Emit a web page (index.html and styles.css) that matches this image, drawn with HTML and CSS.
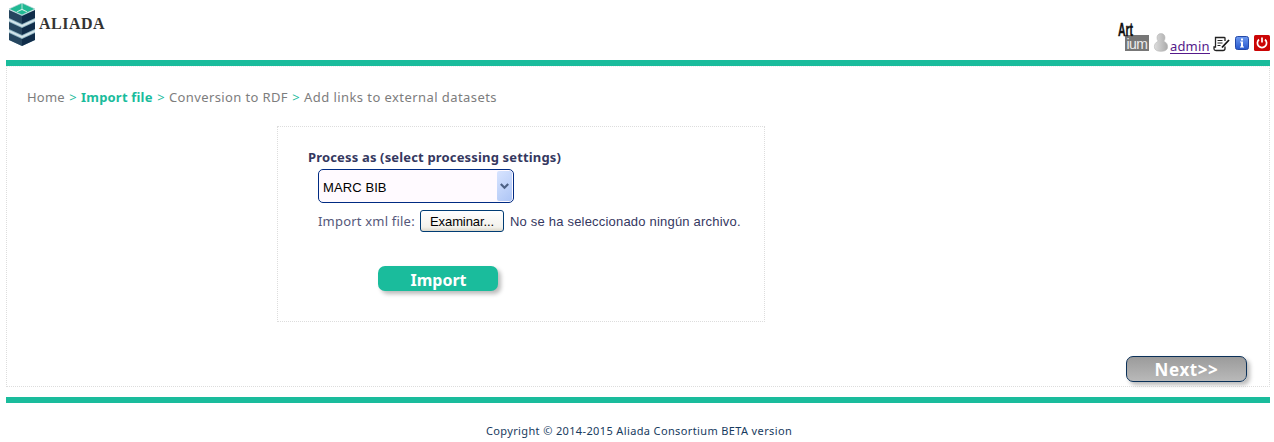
FILE: index.html
```html
<!DOCTYPE html>
<html lang="en">
<head>
<meta charset="utf-8">
<title>ALIADA</title>
<link rel="stylesheet" href="styles.css">
</head>
<body>
<header class="header">
  <a class="brand">
    <svg class="cube" width="28" height="44" viewBox="0 0 28 44">
      <path fill="#8fb5c2" d="M1 7 14 12 27 7V37L14 43 1 37z"/>
      <path fill="#26465f" d="M1 7 14 13V21L1 15zM1 19 14 25V32L1 26zM1 30 14 36V43L1 37z"/>
      <path fill="#102d4a" d="M27 7 14 13V21L27 15zM27 19 14 25V32L27 26zM27 30 14 36V43L27 37z"/>
      <path fill="#d5e5eb" d="M1 16 14 22 27 16V18L14 24 1 18zM1 27 14 33 27 27V29L14 35 1 29z"/>
      <path fill="#20b993" stroke="#b4d2d5" stroke-width=".7" d="M14 0 27 6 14 12 1 6z"/>
      <path fill="#d9f0e9" d="M13.600 0h.8v6l5 2.500-1 .5-4.400-2-4.500 2-1-.5 5.100-2.500z"/>
    </svg>
    <span class="brand-name">ALIADA</span>
  </a>
  <div class="tools">
    <span class="artium"><span class="art">Art</span><span class="ium">ium</span></span>
    <svg class="user" width="16" height="19" viewBox="0 0 16 19">
      <defs><linearGradient id="ug"><stop offset="0" stop-color="#ddd"/><stop offset="1" stop-color="#aaa"/></linearGradient></defs>
      <path fill="url(#ug)" stroke="#b5b5b5" stroke-width=".6" d="M8 .6c2.600 0 4 1.700 4 4.200 0 1.500-.5 2.600-1.300 3.400 2.600 1 3.900 3 3.900 5.500 0 3.400-2.800 4.600-6.600 4.600s-6.600-1.200-6.600-4.600c0-2.500 1.300-4.500 3.900-5.500C4.500 7.400 4 6.300 4 4.800 4 2.300 5.400.6 8 .6z"/>
    </svg>
    <a class="admin">admin</a>
    <svg class="edit" width="17" height="16" viewBox="0 0 17 16">
      <path fill="#fff" stroke="#222" stroke-width="1.300" d="M12 5V2Q12 1.500 11 1.500H2.500v9.500H1v2Q1 14.500 3 14.500h7q2 0 2-2v-2"/>
      <path stroke="#222" d="M4.500 4.500h5M4.500 7h5M4.500 9.500h3"/>
      <path stroke="#111" stroke-width="1.800" d="m9 11.500 7-7.500"/>
    </svg>
    <svg class="info" width="14" height="14" viewBox="0 0 14 14">
      <defs><linearGradient id="ig" x2="0" y2="1"><stop offset="0" stop-color="#6e9af0"/><stop offset="1" stop-color="#2456cc"/></linearGradient></defs>
      <rect x=".5" y=".5" width="13" height="13" rx="2" fill="url(#ig)" stroke="#2449a8"/>
      <path fill="#fff" d="M6 2.500h2v2H6zM5 5.500h3v5h1v1H5v-1h1v-4H5z"/>
    </svg>
    <svg class="power" width="16" height="16" viewBox="0 0 16 16">
      <rect width="16" height="16" rx="1.500" fill="#cb0505"/>
      <path fill="none" stroke="#fff" stroke-width="1.700" d="M5 4.500a4.600 4.600 0 1 0 6 0M8 2.500v5"/>
    </svg>
  </div>
</header>
<main class="main">
  <nav class="crumbs">
    <span class="c1">Home</span><i>&gt;</i><b>Import file</b><i>&gt;</i><span class="c2">Conversion to RDF</span><i>&gt;</i><span class="c3">Add links to external datasets</span>
  </nav>
  <form class="panel">
    <label class="title">Process as (select processing settings)</label>
    <div class="select"><span>MARC BIB</span>
      <span class="arrow"><svg width="9" height="7" viewBox="0 0 9 7"><path fill="none" stroke="#4d6185" stroke-width="2.200" d="m.8 1 3.700 3.700L8.200 1"/></svg></span>
    </div>
    <div class="file">
      <span class="file-label">Import xml file:</span>
      <span class="browse">Examinar...</span>
      <span class="file-state">No se ha seleccionado ningún archivo.</span>
    </div>
    <div class="btn import">Import</div>
  </form>
  <div class="btn next">Next&gt;&gt;</div>
</main>
<footer class="footer">Copyright © 2014-2015 Aliada Consortium BETA version</footer>
</body>
</html>
```
FILE: styles.css
```css
* { box-sizing: border-box; }
body { margin: 0; padding: 0 4px 0 6px; height: 442px; overflow: hidden; background: #fff; font-family: "Noto Sans", sans-serif; white-space: nowrap; }
.header { height: 66px; border-bottom: 6px solid #1abc9c; display: flex; justify-content: space-between; }
.brand { display: flex; padding: 3px 0 0 2px; }
.brand-name { font: bold 16px/42px "Liberation Serif", serif; color: #333; margin-left: 3px; letter-spacing: .5px; }
.tools { display: flex; align-items: flex-start; }
.artium { width: 31px; height: 31px; margin-top: 20px; display: flex; flex-direction: column; }
.art { font: bold 19px/19px "Liberation Sans", sans-serif; height: 15px; color: #111; transform: scaleX(.55); transform-origin: left; width: 29px; -webkit-text-stroke: .4px #111; }
.ium { width: 24px; height: 16px; margin-left: 7px; background: #777; color: #eee; font: 14px/18px "Liberation Sans", sans-serif; text-align: center; letter-spacing: -.5px; }
.user { margin: 33px 0 0 4px; }
.admin { font-size: 13px; letter-spacing: .15px; line-height: 16px; width: 40px; height: 16px; margin: 38px 3px 0 1px; color: #551a8b; border-bottom: 1px solid #551a8b; }
.edit { margin-top: 36px; }
.info { margin: 36px 5px 0; }
.power { margin-top: 35px; }
.main { height: 321px; border: 1px dotted #ddd; border-top-color: #eee; display: flex; flex-direction: column; }
.crumbs { height: 60px; padding: 20px 0 0 20px; font-size: 13px; line-height: 20px; color: #7d7d7d; display: flex; }
.crumbs i { font-style: normal; color: #1abc9c; width: 16px; text-align: center; }
.crumbs b { color: #1abc9c; width: 72px; letter-spacing: .2px; }
.c1 { width: 38px; letter-spacing: .2px; }
.c2 { width: 119px; letter-spacing: .38px; }
.c3 { letter-spacing: .43px; }
.panel { width: 488px; height: 196px; margin: -1px 0 0 270px; border: 1px dotted #ddd; padding: 20px 0 0 30px; color: #35385f; }
.title { display: block; font-size: 13px; font-weight: bold; letter-spacing: .16px; line-height: 20px; height: 22px; }
.select { width: 196px; height: 34px; margin-left: 10px; border: 1px solid #002b82; border-radius: 5px; background: #fffaff; color: #000; display: flex; justify-content: space-between; padding: 1px 1px 1px 4px; font: 13px/33px "Liberation Sans", sans-serif; letter-spacing: .1px; }
.arrow { width: 15px; background: linear-gradient(135deg, #d8e4ff, #adc5f5); border-radius: 2px; display: flex; align-items: center; justify-content: center; }
.file { display: flex; margin: 7px 0 0 10px; height: 22px; line-height: 22px; font-size: 13px; }
.file-label { width: 102px; color: #55587a; letter-spacing: .2px; }
.browse { width: 84px; height: 22px; border: 1px solid #003c74; border-radius: 3px; background: linear-gradient(#fff, #f3f2ec 80%, #ddd8ca); color: #000; text-align: center; font: 13px/22px "Liberation Sans", sans-serif; letter-spacing: -.1px; }
.file-state { margin-left: 6px; font: 13px/24px "Liberation Sans", sans-serif; letter-spacing: .2px; }
.btn { color: #fff; font-weight: bold; text-align: center; border-radius: 7px; box-shadow: 3px 3px 4px #bbb; }
.import { width: 120px; height: 25px; line-height: 28px; margin: 34px 0 0 70px; padding-left: 1px; background: #1abc9c; font-size: 16px; }
.next { width: 121px; height: 26px; line-height: 26px; margin: 34px 22px 0 auto; border: 1px solid #0b3159; background: linear-gradient(#9b9b9b, #b9b9b9); font-size: 17px; letter-spacing: .6px; }
.footer { margin-top: 10px; border-top: 6px solid #1abc9c; padding: 20px 0 0 2px; text-align: center; font-size: 11px; line-height: 16px; letter-spacing: .37px; color: #173b5e; }
```
